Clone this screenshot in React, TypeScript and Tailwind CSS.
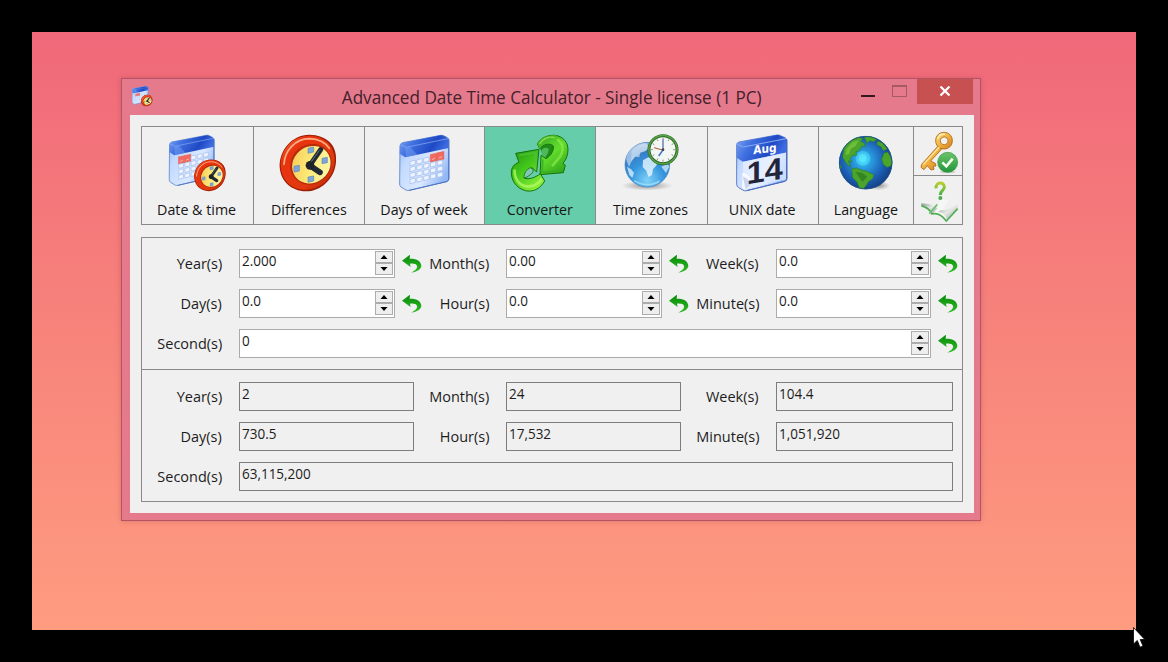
import React from "react";

const FONT = "font-['Open_Sans','Noto_Sans',sans-serif]";

function Palette() {
  return (
    <svg width="0" height="0" className="absolute" aria-hidden="true">
      <defs>
        <linearGradient id="calHead" x1="0" y1="0" x2="1" y2="0.3">
          <stop offset="0" stopColor="#7ea6f2" />
          <stop offset="0.35" stopColor="#3f6fe0" />
          <stop offset="0.75" stopColor="#1f49c4" />
          <stop offset="1" stopColor="#3d6ce0" />
        </linearGradient>
        <linearGradient id="calBody" x1="0" y1="0" x2="1" y2="0.6">
          <stop offset="0" stopColor="#86b1f6" />
          <stop offset="0.3" stopColor="#c3daff" />
          <stop offset="0.7" stopColor="#dbe9ff" />
          <stop offset="1" stopColor="#93b8f6" />
        </linearGradient>
        <linearGradient id="rim" x1="0" y1="0" x2="1" y2="1">
          <stop offset="0" stopColor="#f9793f" />
          <stop offset="0.25" stopColor="#e8330f" />
          <stop offset="0.7" stopColor="#e03a10" />
          <stop offset="1" stopColor="#b82206" />
        </linearGradient>
        <linearGradient id="face" x1="0" y1="0" x2="1" y2="1">
          <stop offset="0" stopColor="#f6c552" />
          <stop offset="0.5" stopColor="#fdeb7a" />
          <stop offset="1" stopColor="#fff9b8" />
        </linearGradient>
        <linearGradient id="greenA" x1="0" y1="0" x2="0.7" y2="1">
          <stop offset="0" stopColor="#1f9412" />
          <stop offset="0.5" stopColor="#45c81b" />
          <stop offset="1" stopColor="#8df03c" />
        </linearGradient>
        <linearGradient id="greenB" x1="0.2" y1="0" x2="0.8" y2="1">
          <stop offset="0" stopColor="#3fb324" />
          <stop offset="0.45" stopColor="#62dc2c" />
          <stop offset="1" stopColor="#2fa517" />
        </linearGradient>
        <radialGradient id="sea" cx="0.45" cy="0.45" r="0.6">
          <stop offset="0" stopColor="#3fd8ff" />
          <stop offset="0.25" stopColor="#2b9ee0" />
          <stop offset="0.65" stopColor="#1b5fb4" />
          <stop offset="1" stopColor="#123a7c" />
        </radialGradient>
        <radialGradient id="ice" cx="0.5" cy="0.85" r="0.85">
          <stop offset="0" stopColor="#7fd2f8" />
          <stop offset="0.45" stopColor="#3595dd" />
          <stop offset="0.8" stopColor="#3a78c0" />
          <stop offset="1" stopColor="#7faad6" />
        </radialGradient>
        <radialGradient id="shade">
          <stop offset="0" stopColor="#555" stopOpacity="0.65" />
          <stop offset="1" stopColor="#777" stopOpacity="0" />
        </radialGradient>
        <linearGradient id="gold" x1="0" y1="0" x2="1" y2="1">
          <stop offset="0" stopColor="#ffdc7c" />
          <stop offset="0.5" stopColor="#f2b23d" />
          <stop offset="1" stopColor="#cf7a1c" />
        </linearGradient>
        <linearGradient id="ok" x1="0" y1="0" x2="0" y2="1">
          <stop offset="0" stopColor="#6cc36a" />
          <stop offset="1" stopColor="#23963a" />
        </linearGradient>
        <linearGradient id="ask" x1="0" y1="0" x2="0" y2="1">
          <stop offset="0" stopColor="#b6cf2c" />
          <stop offset="1" stopColor="#45b04a" />
        </linearGradient>
        <linearGradient id="page" x1="0" y1="0" x2="1" y2="1">
          <stop offset="0" stopColor="#8f9a91" />
          <stop offset="0.5" stopColor="#e6eae6" />
          <stop offset="1" stopColor="#939e95" />
        </linearGradient>
        <linearGradient id="back" x1="0" y1="0" x2="0" y2="1">
          <stop offset="0" stopColor="#078a0c" />
          <stop offset="1" stopColor="#2fbb22" />
        </linearGradient>
      </defs>
    </svg>
  );
}

/* A leaning calendar sheet, 152 x 168 units, with two marked days in the given column. */
function CalendarSheet({ marked }: { marked: number }) {
  const cols = [0, 1, 2, 3, 4];
  const rows = [0, 1, 2, 3];
  return (
    <g>
      <path d="M4 34Q4 26 12 24L126 2Q132 1 138 5L146 9Q151 12 151 18V132Q151 139 144 141L32 167Q26 169 20 165L7 157Q3 154 3 148Z" fill="url(#calBody)" stroke="#6c8fd0" strokeWidth="3" />
      <path d="M4 34Q4 26 12 24L126 2Q132 1 138 5L146 9Q151 12 151 18V40L20 68L3 57Z" fill="url(#calHead)" />
      <path d="M6 30L22 38L148 12" fill="none" stroke="#8fb2f6" strokeWidth="2.5" opacity="0.8" />
      <path d="M20 40L34 36L56 60L22 67Z" fill="#8fb6ff" opacity="0.35" />
      <path d="M150 16V132Q150 139 143 141L32 167" fill="none" stroke="#4f73c6" strokeWidth="3" />
      {rows.map((r) =>
        cols.map((c) => {
          const x = 34 + c * 20.5;
          const y = 80 + r * 18 - c * 4.6;
          const hot = r === 0 && (c === marked || c === marked + 1);
          return (
            <g key={`${r}-${c}`}>
              <path
                d={hot ? `M${x - 1} ${y - 7}l21 -4.5v24l-21 4.5z` : `M${x} ${y}l16 -3.8v13l-16 3.8z`}
                fill={hot ? "#ef6a60" : "#edf3ff"}
                stroke={hot ? "#e8574d" : "#a3bcec"}
                strokeWidth={hot ? "1" : "2.2"}
              />
              {hot && <path d={`M${x + 4} ${y + 9}l10 -5`} stroke="#f9b7ae" strokeWidth="3" />}
            </g>
          );
        }),
      )}
    </g>
  );
}

/* Round wall clock with a red rim, centred on the origin, radius 85. */
function RedClock() {
  return (
    <g>
      <path d="M-85 12C-87 -38 -48 -85 4 -85C30 -85 50 -76 62 -65C78 -52 86 -30 84 -4C80 50 36 85 -6 85C-52 84 -82 54 -85 12Z" fill="#9c1c04" />
      <path d="M-82 8C-83 -40 -45 -82 3 -82C50 -82 80 -52 80 -8C80 42 40 81 -8 80C-52 80 -80 50 -82 8Z" fill="url(#rim)" />
      <path d="M-72 4C-70 -38 -38 -72 4 -73C32 -73 54 -60 64 -44" fill="none" stroke="#ffae86" strokeWidth="5" strokeLinecap="round" />
      <ellipse cx="9" cy="4" rx="64" ry="59" transform="rotate(-38 9 4)" fill="#b52a08" />
      <ellipse cx="10" cy="5" rx="60" ry="54" transform="rotate(-38 10 5)" fill="url(#face)" />
      <g fill="#7ea6d6" stroke="#5d86bb" strokeWidth="2">
        <path d="M0 -44l17 -4v15l-17 4z" />
        <path d="M42 -14l16 -3v16l-16 3z" />
        <path d="M-42 10l16 -3v17l-16 3z" />
        <path d="M0 42l17 -3v15l-17 4z" />
      </g>
      <path d="M5 8L38 -40" stroke="#222a33" strokeWidth="15" strokeLinecap="round" />
      <path d="M6 8L36 28" stroke="#222a33" strokeWidth="17" strokeLinecap="round" />
      <circle cx="6" cy="7" r="13" fill="#1e2228" />
      <path d="M10 -4L34 -38" stroke="#65717d" strokeWidth="3" />
    </g>
  );
}

function DateTimeIcon({ className }: { className: string }) {
  return (
    <svg viewBox="149 186 192 192" className={className}>
      <g transform="translate(156 194) scale(0.91)">
        <CalendarSheet marked={0} />
      </g>
      <g transform="translate(281 316) scale(0.56)">
        <RedClock />
      </g>
    </svg>
  );
}

function DifferencesIcon() {
  return (
    <svg viewBox="484 186 192 192" className="size-16">
      <g transform="translate(577 279)">
        <RedClock />
      </g>
    </svg>
  );
}

function DaysIcon() {
  return (
    <svg viewBox="99 186 192 192" className="size-16">
      <g transform="translate(116 194)">
        <CalendarSheet marked={3} />
      </g>
    </svg>
  );
}

function ConverterIcon() {
  return (
    <svg viewBox="12 6 192 192" className="size-16">
      <path d="M108 56C116 36 140 32 154 46C158 62 150 80 134 92L118 76Z" fill="#1f8c16" />
      <path d="M112 62C118 52 126 52 134 56C134 66 130 76 122 82L113 75Z" fill="#4fb95a" />
      <g stroke="#16720f" strokeWidth="3" strokeLinejoin="round">
        <path d="M100 42C110 22 136 12 160 17C186 25 195 46 191 70C189 82 184 92 177 100L184 106L178 128L108 134L111 76L126 86C140 78 150 62 148 48C138 38 118 42 107 56Z" fill="url(#greenB)" />
        <path d="M35 70L105 58L98 126L84 113C73 120 64 130 60 144C76 150 95 142 109 131L122 153C108 178 85 187 64 182C36 174 20 150 22 122C25 108 32 102 45 97Z" fill="url(#greenA)" />
      </g>
      <path d="M60 144C59 130 68 118 79 113L88 119L86 128C80 132 72 142 60 144Z" fill="#7fc9b4" stroke="#16720f" strokeWidth="2.5" />
      <path d="M100 42C110 22 136 12 160 17C146 22 138 28 128 39C118 42 112 48 107 56Z" fill="#4cbb2a" />
      <path d="M108 40C118 26 134 20 150 22" fill="none" stroke="#9bea5e" strokeWidth="4" opacity="0.8" strokeLinecap="round" />
      <path d="M162 30C178 42 180 62 168 80L146 106" fill="none" stroke="#93ee4e" strokeWidth="8" opacity="0.6" strokeLinecap="round" />
      <path d="M116 88L114 127L168 123" fill="none" stroke="#3aad24" strokeWidth="6" opacity="0.8" />
      <path d="M45 76L96 67L91 100" fill="none" stroke="#4fbf38" strokeWidth="5" opacity="0.8" />
      <path d="M32 122C31 148 48 170 74 169C88 168 103 161 111 149" fill="none" stroke="#b5f866" strokeWidth="8" opacity="0.75" strokeLinecap="round" />
    </svg>
  );
}

function TimeZonesIcon() {
  return (
    <svg viewBox="91 186 192 192" className="size-16">
      <ellipse cx="172" cy="347" rx="78" ry="15" fill="url(#shade)" />
      <circle cx="173" cy="284" r="67" fill="url(#ice)" stroke="#3f7fbd" strokeWidth="2" />
      <path d="M109 268C114 241 138 219 168 219L178 232L166 244L152 247L149 262L136 260L124 277L118 291Z" fill="#d8ebfa" opacity="0.6" />
      <path d="M160 271L176 262L192 269L207 274L199 288L190 297L187 315L176 321L170 302L159 291Z" fill="#e8f6ff" opacity="0.8" />
      <path d="M112 290L124 298L133 308L128 323L119 315Z" fill="#d3edfc" opacity="0.8" />
      <path d="M215 290L234 280L239 290L229 309Z" fill="#d3edfc" opacity="0.75" />
      <path d="M126 243C147 217 184 215 204 226C184 240 151 242 124 273Z" fill="#fff" opacity="0.3" />
      <path d="M134 332C155 347 190 348 209 333" fill="none" stroke="#a7e4ff" strokeWidth="5" opacity="0.7" />
      <circle cx="220" cy="239" r="42" fill="#f3f6f3" stroke="#2c6b26" strokeWidth="9" />
      <circle cx="220" cy="239" r="42.5" fill="none" stroke="#5aa548" strokeWidth="4" />
      <g stroke="#8b938d" strokeWidth="3">
        <path d="M220 203v6M220 269v6M184 239h6M250 239h6M202 208l3 5M238 208l-3 5M202 270l3 -5M238 270l-3 -5M189 221l5 3M251 221l-5 3M189 257l5 -3M251 257l-5 -3" />
      </g>
      <path d="M220 240V208" stroke="#3f62a8" strokeWidth="3.5" />
      <path d="M220 240L207 258" stroke="#3f78c4" strokeWidth="4.5" />
      <path d="M222 241L193 233" stroke="#a8573e" strokeWidth="3" />
      <circle cx="220" cy="239" r="4" fill="#3a4250" />
    </svg>
  );
}

function UnixIcon() {
  return (
    <svg viewBox="424 186 192 192" className="size-16">
      <path d="M441 224Q441 218 448 216L562 195Q568 194 574 198L586 203Q592 206 592 213V326Q592 332 585 334L471 362Q465 364 459 360L446 352Q441 349 441 342Z" fill="url(#calBody)" stroke="#5f7fca" strokeWidth="3" />
      <path d="M441 224Q441 218 448 216L562 195Q568 194 574 198L586 203Q592 206 592 213V247L460 275L441 263Z" fill="url(#calHead)" />
      <path d="M443 223L461 231L589 206" fill="none" stroke="#88abf3" strokeWidth="3" />
      <path d="M460 275L589 248V328L480 355L460 340Z" fill="#eef3ff" opacity="0.6" />
      <path d="M458 308C474 310 484 322 486 344L469 360L458 355Z" fill="#f8faff" />
      <path d="M459 319Q474 324 485 343L468 358Z" fill="#a9bcea" opacity="0.6" />
      <text x="0" y="0" transform="translate(491 253) skewY(-7)" fontFamily="DejaVu Sans, sans-serif" fontWeight="700" fontSize="35" textLength="70" lengthAdjust="spacingAndGlyphs" fill="#ffffff">Aug</text>
      <text x="0" y="0" transform="translate(471 343) skewY(-9)" fontFamily="Liberation Sans, sans-serif" fontWeight="700" fontSize="92" textLength="108" lengthAdjust="spacingAndGlyphs" fill="#23243a">14</text>
      <path d="M591 208V326Q591 332 585 334L471 362" fill="none" stroke="#4668be" strokeWidth="3" />
    </svg>
  );
}

function LanguageIcon() {
  return (
    <svg viewBox="163 186 192 192" className="size-16">
      <ellipse cx="296" cy="347" rx="36" ry="14" fill="url(#shade)" />
      <circle cx="258" cy="278" r="80" fill="url(#sea)" />
      <g fill="#4ba52b" stroke="#2c7d2c" strokeWidth="2">
        <path d="M192 238C201 220 217 207 236 202L250 206L243 214L253 219L257 229L246 229L239 241L228 246L232 258L221 254L211 266L217 277L206 272L213 291L201 281L189 262Z" />
        <path d="M216 297L231 294L247 301L262 304L283 315L279 326L266 335L260 346L250 357L238 352L232 336L219 323Z" />
        <path d="M313 249L324 246L332 259L337 275L333 288L322 292L311 283L306 268Z" />
        <path d="M293 213L308 219L323 237L311 242L303 229L292 225Z" />
        <path d="M254 201L274 200L291 208L282 215L270 212L263 220L258 211Z" />
        <path d="M181 283L186 294L182 296Z" />
      </g>
      <path d="M201 236L219 216L237 211L228 228L214 236L208 252L197 255Z" fill="#78c53f" opacity="0.75" />
      <path d="M228 306L247 308L263 320L248 336Z" fill="#28771f" opacity="0.7" />
      <circle cx="250" cy="265" r="22" fill="#55eaff" opacity="0.45" />
      <circle cx="249" cy="264" r="12" fill="#68f2ff" opacity="0.5" />
      <circle cx="258" cy="278" r="79" fill="none" stroke="#1f5285" strokeWidth="3" opacity="0.7" />
    </svg>
  );
}

function KeyIcon() {
  return (
    <svg viewBox="402 171 144 144" className="size-12">
      <g stroke="#a8661c" strokeWidth="2.5" strokeLinejoin="round">
        <path d="M476 226L486 236L452 273L466 280L468 288L460 289L462 298L453 300L442 287L432 299L423 292L425 283Z" fill="url(#gold)" />
        <path fillRule="evenodd" d="M492 187C507 187 517 198 517 212C517 227 506 237 492 237C477 237 467 226 467 212C467 198 477 187 492 187ZM493 201C486 201 481 206 481 212C481 219 486 224 493 224C499 224 504 219 504 212C504 206 499 201 493 201Z" fill="url(#gold)" />
      </g>
      <path d="M478 231L430 284" stroke="#ffe79d" strokeWidth="4" />
      <path d="M473 208C475 197 484 192 495 193" fill="none" stroke="#fff0b5" strokeWidth="4" />
      <ellipse cx="503" cy="306" rx="24" ry="4" fill="#777" opacity="0.25" />
      <circle cx="503" cy="277" r="30" fill="url(#ok)" stroke="#2f9243" strokeWidth="2" />
      <path d="M487 277L499 289L518 266" fill="none" stroke="#f4fff2" strokeWidth="8" />
    </svg>
  );
}

function HelpIcon() {
  return (
    <svg viewBox="402 317 144 144" className="size-12">
      <path d="M424 401C438 402 452 405 463 412L483 389L507 387L488 419C498 423 507 420 533 409L532 418L499 453C488 438 472 430 455 430C452 417 440 408 424 405Z" fill="#f5f7f4" />
      <path d="M424 399C441 400 461 403 472 414L458 430C452 418 440 411 424 407Z" fill="url(#page)" />
      <path d="M484 419C497 423 514 413 533 401V413L501 447C495 434 490 427 474 424Z" fill="url(#page)" />
      <path d="M424 406C437 410 450 416 456 431C473 426 488 437 499 452L533 415" fill="none" stroke="#54ad59" strokeWidth="5" />
      <path d="M472 402L448 430" stroke="#6fc072" strokeWidth="5" />
      <path d="M468 354C467 333 493 333 493 350C493 361 481 360 481 374" fill="none" stroke="url(#ask)" strokeWidth="9" />
      <circle cx="481" cy="383" r="6" fill="#47ad48" />
    </svg>
  );
}

function ResetIcon() {
  return (
    <svg viewBox="0 0 60 54" className="h-[18px] w-5 shrink-0">
      <path d="M0 17L24 -1L23 11C43 10 57 18 58 32C58 42 45 50 28 53C40 46 47 40 45 33C43 27 36 25 24 26L26 36Z" fill="url(#back)" />
    </svg>
  );
}

function Spinner() {
  return (
    <div className="mt-px flex h-6 w-[18px] flex-col">
      <button className="flex h-3 items-center justify-center border border-[#acacac] bg-[#eeeeee]">
        <svg viewBox="0 0 8 4" className="h-1 w-2"><path d="M4 0L7.5 4H.5Z" fill="#000" /></svg>
      </button>
      <button className="flex h-3 items-center justify-center border border-[#acacac] bg-[#eeeeee]">
        <svg viewBox="0 0 8 4" className="h-1 w-2"><path d="M.5 0H7.5L4 4Z" fill="#000" /></svg>
      </button>
    </div>
  );
}

function Label({ text, width }: { text: string; width: string }) {
  return (
    <div className={`${width} flex h-[29px] shrink-0 justify-end pt-0.5 pr-px text-[15px] leading-6 text-[#1c1c1c]`}>
      <span className="origin-right scale-x-[0.965] whitespace-nowrap">{text}</span>
    </div>
  );
}

function SpinField({ value, width }: { value: string; width: string }) {
  return (
    <div className={`${width} flex h-[29px] justify-between border border-[#ababab] bg-white pr-px pl-[1.5px]`}>
      <span className="origin-left scale-x-[0.9] text-[15px] leading-[21px] text-[#1c1c1c]">{value}</span>
      <Spinner />
    </div>
  );
}

function ResultField({ value, width }: { value: string; width: string }) {
  return (
    <div className={`${width} flex h-[29px] border border-[#7d7d7d] bg-[#f0f0f0] pl-[1.5px]`}>
      <span className="origin-left scale-x-[0.9] text-[15px] leading-5 text-[#1c1c1c]">{value}</span>
    </div>
  );
}

type Field = { label: string; value: string };

const FIELD_COLS = [
  { label: "w-[81px]", pad: "pl-4", input: "w-[156px]", result: "w-[175px]", tail: "w-[8px]" },
  { label: "w-[68px]", pad: "pl-4", input: "w-[156px]", result: "w-[175px]", tail: "w-[8px]" },
  { label: "w-[71px]", pad: "pl-4", input: "w-[155px]", result: "w-[177px]", tail: "w-0" },
];

function InputRow({ fields }: { fields: Field[] }) {
  return (
    <div className="flex">
      {fields.map((f, i) => (
        <div key={f.label} className="flex">
          <Label text={f.label} width={FIELD_COLS[i].label} />
          <div className={`flex items-center gap-[7px] ${FIELD_COLS[i].pad}`}>
            <SpinField value={f.value} width={FIELD_COLS[i].input} />
            <ResetIcon />
          </div>
        </div>
      ))}
    </div>
  );
}

function ResultRow({ fields }: { fields: Field[] }) {
  return (
    <div className="flex">
      {fields.map((f, i) => (
        <div key={f.label} className="flex">
          <Label text={f.label} width={FIELD_COLS[i].label} />
          <div className={`flex ${FIELD_COLS[i].pad}`}>
            <ResultField value={f.value} width={FIELD_COLS[i].result} />
            <div className={FIELD_COLS[i].tail} />
          </div>
        </div>
      ))}
    </div>
  );
}

const TOOLS: { label: string; width: string; icon: React.ReactNode; active?: boolean }[] = [
  { label: "Date & time", width: "w-[112px]", icon: <DateTimeIcon className="size-16" /> },
  { label: "Differences", width: "w-[111px]", icon: <DifferencesIcon /> },
  { label: "Days of week", width: "w-[120px]", icon: <DaysIcon /> },
  { label: "Converter", width: "w-[111px]", icon: <ConverterIcon />, active: true },
  { label: "Time zones", width: "w-[112px]", icon: <TimeZonesIcon /> },
  { label: "UNIX date", width: "w-[111px]", icon: <UnixIcon /> },
  { label: "Language", width: "w-[95px]", icon: <LanguageIcon /> },
];

function Toolbar() {
  return (
    <div className="flex h-[99px] w-[822px] border border-[#8a8a8a]">
      {TOOLS.map((t) => (
        <button
          key={t.label}
          className={`${t.width} flex shrink-0 flex-col items-center border-r border-[#8a8a8a] pt-[5px] ${t.active ? "bg-[#66cdaa]" : "bg-[#f0f0f0]"}`}
        >
          {t.icon}
          <span className="mt-px mr-px origin-center scale-x-[0.95] text-[15px] leading-6 whitespace-nowrap text-[#161616]">{t.label}</span>
        </button>
      ))}
      <div className="flex w-12 flex-col">
        <button className="h-[49px] border-b border-[#8a8a8a]"><KeyIcon /></button>
        <button className="h-12"><HelpIcon /></button>
      </div>
    </div>
  );
}

function TitleBar() {
  return (
    <div className="flex h-9 pr-[7px] pl-[9px]">
      <DateTimeIcon className="mt-[6px] size-[23px]" />
      <div className="flex flex-1 justify-center pt-1 pl-[95px]">
        <h1 className="origin-center scale-x-[0.951] text-[18px] leading-7 whitespace-nowrap text-[#43202a]">
          Advanced Date Time Calculator - Single license (1 PC)
        </h1>
      </div>
      <button className="flex h-[25px] w-[30px] items-start justify-center pt-4"><span className="mr-0.5 h-0.5 w-[14px] bg-[#33191f]" /></button>
      <button className="flex h-[25px] w-[33px] items-start justify-center pt-1.5"><span className="mr-0.5 h-3 w-[15px] border border-t-2 border-[#a55a66]" /></button>
      <button className="flex h-[25px] w-14 justify-center bg-[#c75050] pt-[7px]">
        <svg viewBox="0 0 12 10" className="mr-px h-[10px] w-3"><path d="M1.5 .5L10.5 9.5M10.5 .5L1.5 9.5" stroke="#fff" strokeWidth="2.2" /></svg>
      </button>
    </div>
  );
}

export default function App() {
  return (
    <div className={`relative h-[662px] w-[1168px] overflow-hidden bg-black p-8 ${FONT}`}>
      <Palette />
      <div className="h-[598px] w-[1104px] bg-linear-to-b from-[#f0687a] via-[#f7837b] to-[#fe9c80] pt-[46px] pl-[89px]">
        <div className="flex h-[443px] w-[860px] flex-col border border-[#b55266] bg-[#e57a8d] shadow-[0_0_5px_rgba(120,30,40,0.25)]">
          <TitleBar />
          <div className="ml-2 flex h-[398px] w-[844px] flex-col bg-[#f0f0f0] pt-[11px] pl-[11px]">
            <Toolbar />
            <div className="mt-3 flex h-[265px] w-[822px] flex-col border border-[#8a8a8a]">
              <div className="flex h-[132px] flex-col gap-[11px] border-b border-[#8a8a8a] pt-[11px]">
                <InputRow fields={[{ label: "Year(s)", value: "2.000" }, { label: "Month(s)", value: "0.00" }, { label: "Week(s)", value: "0.0" }]} />
                <InputRow fields={[{ label: "Day(s)", value: "0.0" }, { label: "Hour(s)", value: "0.0" }, { label: "Minute(s)", value: "0.0" }]} />
                <div className="flex">
                  <Label text="Second(s)" width="w-[81px]" />
                  <div className="flex items-center gap-[7px] pl-4">
                    <SpinField value="0" width="w-[692px]" />
                    <ResetIcon />
                  </div>
                </div>
              </div>
              <div className="flex flex-col gap-[11px] pt-3">
                <ResultRow fields={[{ label: "Year(s)", value: "2" }, { label: "Month(s)", value: "24" }, { label: "Week(s)", value: "104.4" }]} />
                <ResultRow fields={[{ label: "Day(s)", value: "730.5" }, { label: "Hour(s)", value: "17,532" }, { label: "Minute(s)", value: "1,051,920" }]} />
                <div className="flex">
                  <Label text="Second(s)" width="w-[81px]" />
                  <div className="flex pl-4">
                    <ResultField value="63,115,200" width="w-[714px]" />
                  </div>
                </div>
              </div>
            </div>
          </div>
        </div>
      </div>
      <svg viewBox="0 0 12 21" className="absolute top-[627px] left-[1133px] h-[21px] w-3">
        <path d="M.5 .5V17L4.3 13.4L7 20.2L10 19L7.2 12.5H11.8Z" fill="#fff" stroke="#000" strokeWidth="0.8" />
      </svg>
    </div>
  );
}
